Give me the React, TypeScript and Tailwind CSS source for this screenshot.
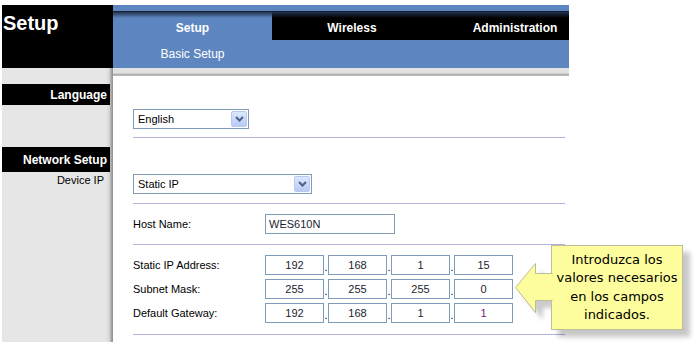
import React from "react";

function Chevron() {
  return (
    <svg width="9" height="6" viewBox="0 0 9 6">
      <path d="M1 1 L4.5 4.5 L8 1" fill="none" stroke="#4d6185" strokeWidth="2" />
    </svg>
  );
}

function Select({ label, width }: { label: string; width: string }) {
  return (
    <div className={`${width} h-[20px] border border-[#7f9db9] bg-white flex items-center justify-between pl-[4px] pr-[1px]`}>
      <span className="text-[11px] leading-none text-black">{label}</span>
      <div className="w-[16px] h-[16px] rounded-[2px] border border-[#b8c9f0] bg-gradient-to-b from-[#dde7fd] to-[#b7cbf6] flex items-center justify-center">
        <Chevron />
      </div>
    </div>
  );
}

function Divider({ mt }: { mt: string }) {
  return <div className={`${mt} h-px bg-[#b3b1e0]`} />;
}

function IpRow({ label, vals, mt, last }: { label: string; vals: string[]; mt: string; last?: boolean }) {
  return (
    <div className={`${mt} flex items-center h-[20px]`}>
      <div className="w-[132px] shrink-0 text-[11px] text-black">{label}</div>
      {vals.map((v, i) => (
        <React.Fragment key={i}>
          {i > 0 && (
            <div className="w-[4px] h-[20px] flex items-end justify-center text-[11px] leading-[16px] text-black">.</div>
          )}
          <div
            className={`w-[59px] h-[20px] shrink-0 border border-[#7f9db9] flex items-center justify-center text-[11px] ${
              last && i === 3 ? "text-[#6a1b7a]" : "text-[#1d1d2e]"
            }`}
          >
            {v}
          </div>
        </React.Fragment>
      ))}
    </div>
  );
}

export default function App() {
  return (
    <div className="relative w-[694px] h-[342px] bg-white overflow-hidden pt-[5px] pl-[2px] font-['Liberation_Sans',Arial,sans-serif]">
      <div className="w-[567px] h-[337px] flex flex-col">
        {/* Header */}
        <div className="flex h-[63px]">
          <div className="w-[111px] shrink-0 bg-black text-white font-bold text-[20px] leading-[20px] pl-[1px] pt-[8px]">
            Setup
          </div>
          <div className="flex-1 bg-[#5d86c0] flex flex-col overflow-hidden">
            <div className="h-[6px]" />
            <div className="h-px bg-[#16223a]" />
            <div className="relative flex h-[28px]">
              <div className="w-[159px] shrink-0 flex items-center justify-center pt-[4px] text-[12px] font-bold text-white">
                Setup
              </div>
              <div className="w-[160px] shrink-0 bg-black flex items-center justify-center pt-[3px] text-[12px] font-bold text-white">
                Wireless
              </div>
              <div className="w-[166px] shrink-0 bg-black flex items-center justify-center pt-[3px] text-[12px] font-bold text-white">
                Administration
              </div>
              <div className="absolute left-0 right-0 top-0 h-[6px] bg-gradient-to-b from-[#22314d] to-transparent" />
            </div>
            <div className="flex h-[28px]">
              <div className="w-[159px] shrink-0 flex items-center justify-center text-[12px] text-white">Basic Setup</div>
            </div>
          </div>
        </div>

        {/* Body */}
        <div className="flex flex-1">
          <div className="w-[111px] shrink-0 flex">
            <div className="w-[108px] bg-[linear-gradient(to_right,#e6e6e6_104px,#d2d2d2_108px)] flex flex-col">
              <div className="mt-[16px] h-[21px] bg-black flex items-center justify-end pr-[3px] text-[12px] font-bold text-white">
                Language
              </div>
              <div className="mt-[42px] h-[25px] bg-black flex items-center justify-end pr-[3px] text-[12px] font-bold text-white">
                Network Setup
              </div>
              <div className="mt-[2px] text-right pr-[6px] text-[11px] leading-[13px] text-black">Device IP</div>
            </div>
            <div className="w-[3px] bg-gradient-to-r from-[#bdbdbd] to-[#8f8f8f]" />
          </div>

          <div className="flex-1 flex flex-col">
            <div className="h-[8px] bg-[linear-gradient(to_bottom,#e3e3e3_0px,#e0e0e0_5px,#9e9e9e_7px,#d8d8d8_8px)]" />
            <div className="pl-[20px] pr-[4px] flex flex-col">
              <div className="mt-[33px]">
                <Select label="English" width="w-[116px]" />
              </div>
              <Divider mt="mt-[8px]" />
              <div className="mt-[36px]">
                <Select label="Static IP" width="w-[179px]" />
              </div>
              <Divider mt="mt-[9px]" />
              <div className="mt-[10px] flex items-center h-[20px]">
                <div className="w-[132px] shrink-0 text-[11px] text-black">Host Name:</div>
                <div className="w-[130px] h-[20px] border border-[#7f9db9] flex items-center pl-[3px] text-[11px] text-[#1d1d2e]">
                  WES610N
                </div>
              </div>
              <Divider mt="mt-[10px]" />
              <IpRow mt="mt-[10px]" label="Static IP Address:" vals={["192", "168", "1", "15"]} />
              <IpRow mt="mt-[4px]" label="Subnet Mask:" vals={["255", "255", "255", "0"]} />
              <IpRow mt="mt-[4px]" label="Default Gateway:" vals={["192", "168", "1", "1"]} last />
              <Divider mt="mt-[11px]" />
            </div>
          </div>
        </div>
      </div>

      {/* Callout */}
      <svg className="absolute left-[514px] top-[258px]" width="50" height="70" viewBox="514 258 50 70">
        <defs>
          <filter id="blur" x="-20%" y="-20%" width="140%" height="140%">
            <feGaussianBlur stdDeviation="2" />
          </filter>
        </defs>
        <path
          d="M559 280 L543 280 L543 270 L522.5 294.5 L543 320 L543 308 L559 308 Z"
          fill="rgba(0,0,0,0.2)"
          filter="url(#blur)"
        />
      </svg>
      <div className="absolute left-[551px] top-[245px] w-[132px] h-[85px] border border-[#bdbd98] bg-[#fdfd9d] shadow-[7px_7px_5px_rgba(0,0,0,0.22)] flex flex-col items-center justify-center text-center text-[13px] leading-[18.5px] text-black font-['DejaVu_Sans',Verdana,sans-serif]">
        <div>Introduzca los</div>
        <div>valores necesarios</div>
        <div>en los campos</div>
        <div>indicados.</div>
      </div>
      <svg className="absolute left-[514px] top-[260px]" width="40" height="56" viewBox="514 260 40 56">
        <path
          d="M552.5 273.5 L535.5 273.5 L535.5 263.5 L515.5 287.5 L535.5 312.5 L535.5 300.5 L552.5 300.5"
          fill="#fdfd9d"
          stroke="#bdbd98"
          strokeWidth="1"
        />
      </svg>
    </div>
  );
}
